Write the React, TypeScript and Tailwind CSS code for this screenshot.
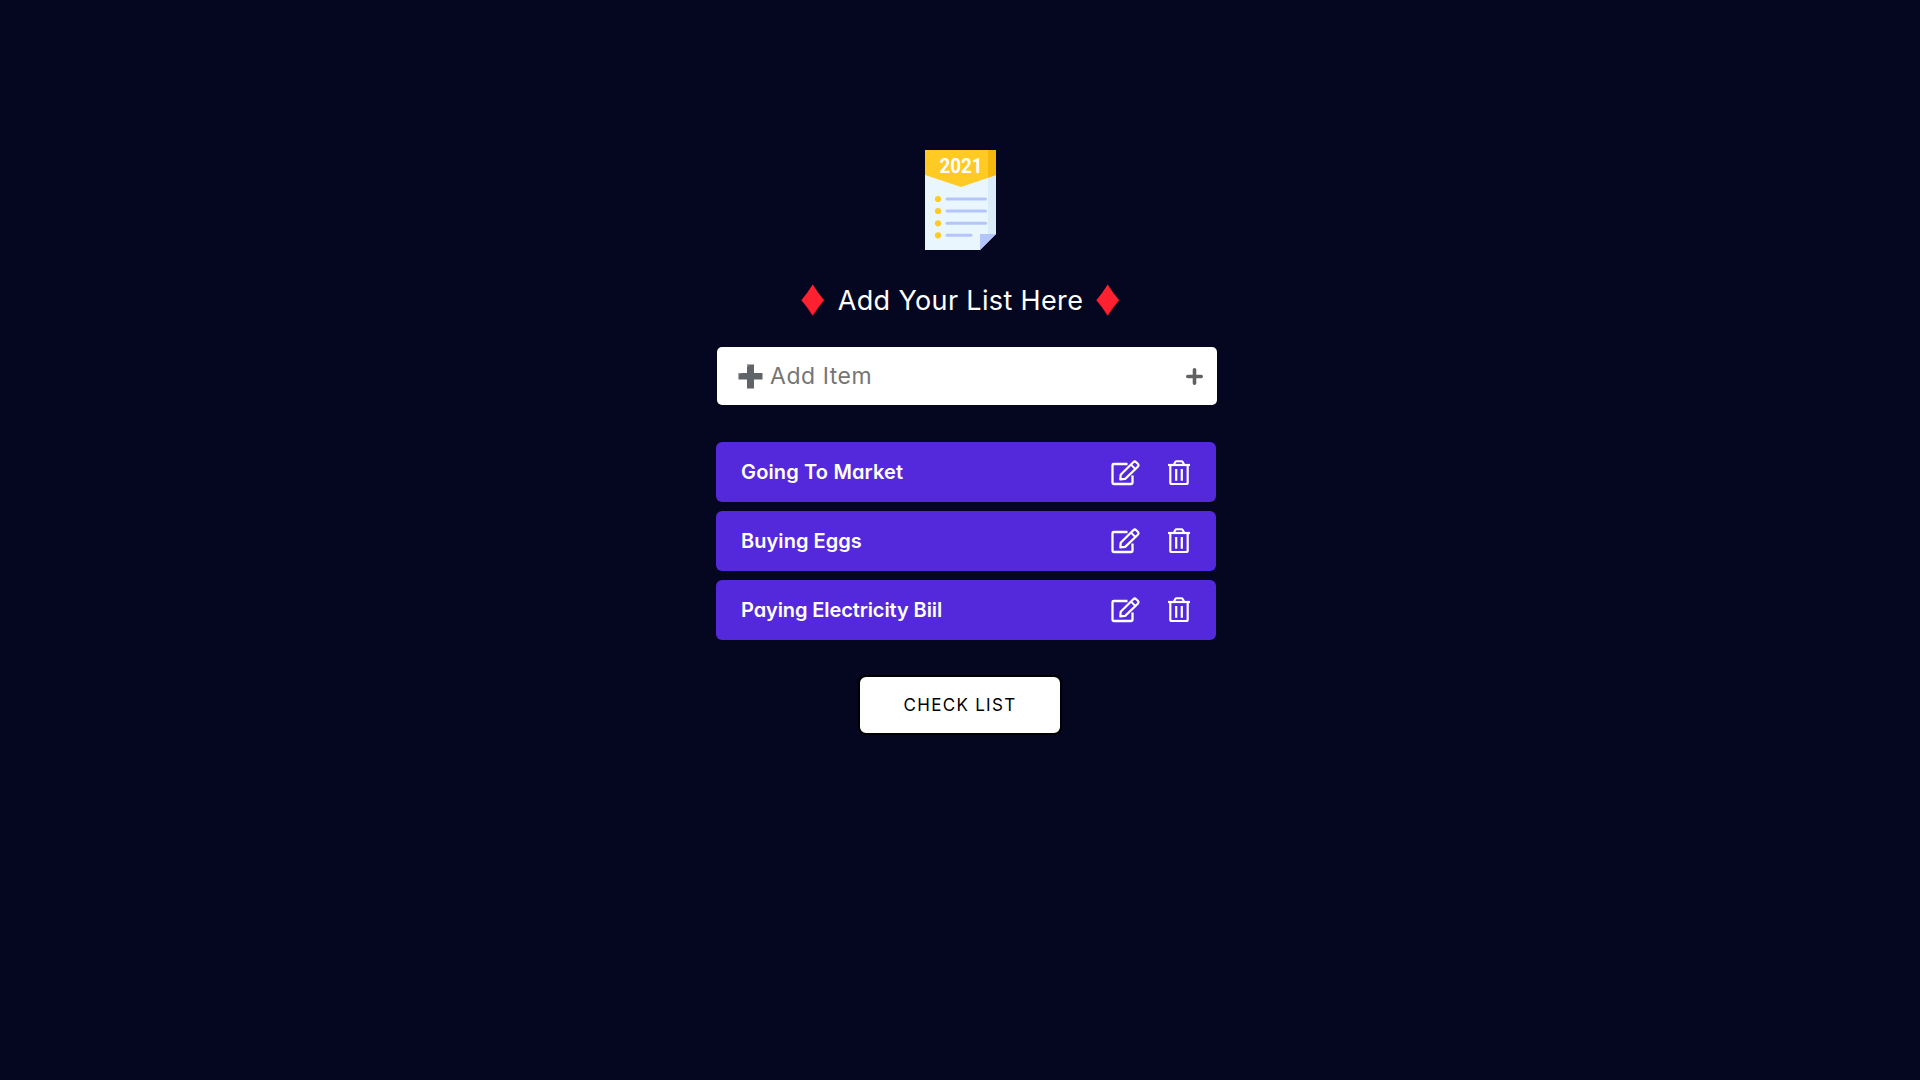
import React from "react";

const items = [
  { label: "Going To Market", spacing: "tracking-[0.15px]", icons: "mt-0.5" },
  { label: "Buying Eggs", spacing: "tracking-[0.05px]", icons: "" },
  { label: "Paying Electricity Biil", spacing: "tracking-[-0.1px]", icons: "" },
];

function NoteLogo() {
  return (
    <svg width="72" height="100" viewBox="0 0 72 100" className="ml-[2px] block">
      <path d="M0 0H71V84L55 100H0Z" fill="#e9f6fe" />
      <path d="M63 20H71V84H63Z" fill="#d9ecf8" />
      <path d="M0 0H71V25L36 37L0 25Z" fill="#ffca23" />
      <path d="M63 0H71V25L63 27.7Z" fill="#f3b90c" />
      <path d="M55 84H71L55 100Z" fill="#b4c5fb" />
      {[49, 61, 73.3, 85.3].map((y, i) => (
        <g key={y}>
          <circle cx="13" cy={y} r="3.1" fill="#ffca23" />
          <path d={i === 3 ? `M22 ${y}H46` : `M22 ${y}H60.5`} stroke="#b4c5fb" strokeWidth="3" strokeLinecap="round" />
        </g>
      ))}
      <text x="14.5" y="23" fontFamily="Roboto, sans-serif" fontWeight="700" fontSize="21" fill="#fff" textLength="43" lengthAdjust="spacingAndGlyphs">2021</text>
    </svg>
  );
}

function Diamond() {
  return (
    <svg width="24" height="32" viewBox="0 0 24 32" className="block">
      <path d="M11.7 0.5Q17 9 23 16Q17 23 11.7 31.3Q6.5 23 0.5 16Q6.5 9 11.7 0.5Z" fill="#ff2130" />
      <path d="M23 16Q17 23 11.7 31.3Q6.5 23 0.5 16" fill="none" stroke="#d8182b" strokeWidth="0.9" />
    </svg>
  );
}

function EditIcon() {
  return (
    <svg width="30" height="26" viewBox="0 0 30 26" fill="none" stroke="#fff" className="block">
      <path d="M17.500 4H3.700Q2.500 4 2.500 5.200V22.800Q2.500 24 3.700 24H21.300Q22.500 24 22.500 22.800V15.500" strokeWidth="2.300" />
      <path d="M10.300 19.300L10.700 14.800L23.300 2.200Q24.700 0.800 26.200 2.200L27.800 3.800Q29.200 5.300 27.800 6.700L15.200 18.900Z" strokeWidth="2.200" strokeLinejoin="round" />
      <path d="M21 4.600L25.400 9" strokeWidth="2" />
    </svg>
  );
}

function TrashIcon() {
  return (
    <svg width="22" height="26" viewBox="0 0 22 26" fill="none" stroke="#fff" className="block">
      <path d="M0 5H22" strokeWidth="2.200" />
      <path d="M5.700 5L7.300 1.900Q7.700 1.200 8.500 1.200H13.500Q14.300 1.200 14.700 1.900L16.300 5" strokeWidth="2.100" />
      <path d="M2.300 5V22.500Q2.300 24 3.800 24H18.200Q19.700 24 19.700 22.500V5" strokeWidth="2.200" />
      <path d="M8.200 9V20.800M13.800 9V20.800" strokeWidth="2.200" />
    </svg>
  );
}

export default function App() {
  return (
    <main className="flex min-h-screen flex-col items-center bg-[#050720] pt-[150px] font-['Inter',sans-serif] [font-feature-settings:'cv11']">
      <NoteLogo />
      <div className="ml-px mt-[34px] flex h-8 items-center gap-[12px]">
        <Diamond />
        <h1 className="mt-0.5 w-[247px] whitespace-nowrap text-center text-[27px] leading-8 tracking-[0.35px] text-white">Add Your List Here</h1>
        <Diamond />
      </div>
      <div className="ml-[14px] mt-[31px] flex h-[58px] w-[500px] items-center rounded-[5px] bg-white pl-[21px] pr-[14px]">
        <svg width="25" height="25" viewBox="0 0 25 25">
          <path d="M9 0.500H16V9H24.500V15.500H16V24.500H9V15.500H0.500V9H9Z" fill="#606368" />
          <path d="M9.500 3V1H12M1 11.500V9.500H3.500" fill="none" stroke="#9a9da0" strokeWidth="0.700" />
        </svg>
        <span className="ml-[7px] grow text-[23px] tracking-[0.55px] text-[#757575]">Add Item</span>
        <svg width="17" height="17" viewBox="0 0 17 17" stroke="#616161" strokeWidth="3.600" strokeLinecap="round" className="mt-px">
          <path d="M8.500 1.800V15.200M1.800 8.500H15.200" />
        </svg>
      </div>
      <ul className="ml-[12px] mt-[37px] flex w-[500px] flex-col gap-[9px]">
        {items.map(({ label, spacing, icons }) => (
          <li key={label} className="flex h-[60px] items-center rounded-[6px] bg-[#5429dc] pl-[25px] pr-[26px] text-white">
            <span className={`grow text-[20px] font-semibold ${spacing}`}>{label}</span>
            <div className={`flex gap-7 ${icons}`}>
              <EditIcon />
              <TrashIcon />
            </div>
          </li>
        ))}
      </ul>
      <button className="mt-[35px] h-[60px] w-[204px] rounded-[8px] border-2 border-black bg-white pt-0.5 text-[17px] tracking-[1.3px] text-black">CHECK LIST</button>
    </main>
  );
}
